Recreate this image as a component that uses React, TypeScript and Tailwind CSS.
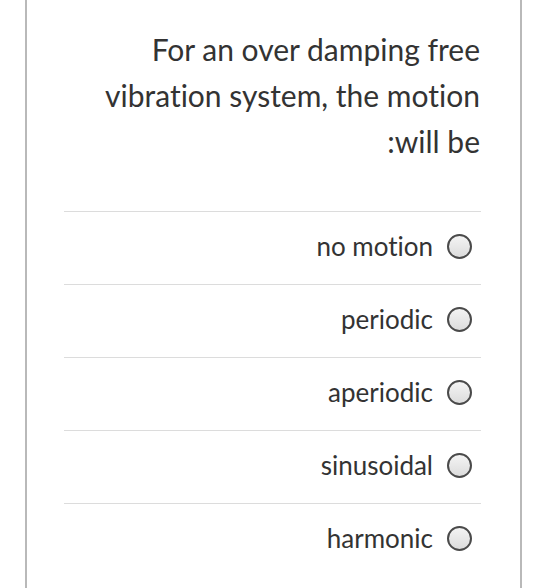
import React from 'react';

const options = ['no motion', 'periodic', 'aperiodic', 'sinusoidal', 'harmonic'];

function Radio() {
  return (
    <span className="block w-[25px] h-[25px] rounded-full border-2 border-[#4a4a4a] bg-gradient-to-b from-[#f4f4f4] to-[#dcdcdc] shrink-0" />
  );
}

export default function App() {
  return (
    <div className="w-[548px] h-[588px] bg-white overflow-hidden [font-variant-ligatures:none]" style={{ fontFamily: 'Lato, "Open Sans", sans-serif' }}>
      <div className="ml-[25px] w-[497px] h-full border-x-2 border-[#b9b9b9]">
        <div className="pt-[26px] pr-[40px] pl-[40px] pb-[47px] text-right text-[30px] leading-[46px] text-[#333]">
          For an over damping free
          <br />
          vibration system, the motion
          <br />
          :will be
        </div>
        <div className="ml-[37px] mr-[39px]">
          {options.map((opt) => (
            <div key={opt} className="h-[73px] pb-[3px] border-t border-[#dcdcdc] flex items-center justify-end gap-[14px] pr-[9px]">
              <span className="text-[26px] text-[#333]">{opt}</span>
              <Radio />
            </div>
          ))}
        </div>
      </div>
    </div>
  );
}
